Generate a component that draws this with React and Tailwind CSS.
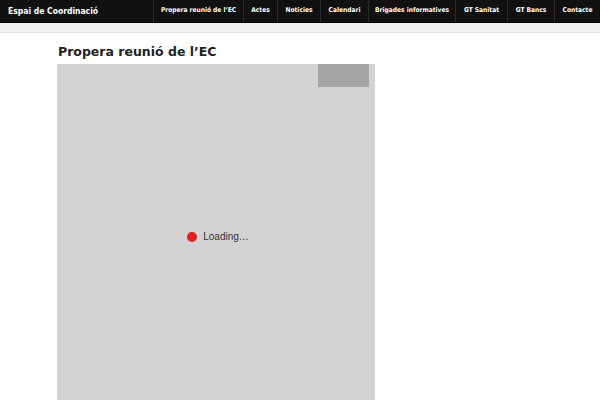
export default function App() {
  const items = [
    ["Propera reunió de l’EC", "w-[90px]"],
    ["Actes", "w-[34px]"],
    ["Noticies", "w-[43px]"],
    ["Calendari", "w-[48px]"],
    ["Brigades informatives", "w-[87px]"],
    ["GT Sanitat", "w-[52px]"],
    ["GT Bancs", "w-[47px]"],
    ["Contacte", "w-[46px]"],
  ];
  return (
    <div className="w-[600px] h-[400px] overflow-hidden bg-white" style={{ fontFamily: '"DejaVu Sans", sans-serif' }}>
      <div className="h-[23px] bg-[#111111] border-b border-[#000] flex items-stretch">
        <div
          className="flex items-center pl-[8px] text-white font-bold text-[8.5px] flex-1 whitespace-nowrap"
          style={{ fontFamily: '"DejaVu Sans Condensed", "DejaVu Sans", sans-serif', fontStretch: "condensed" }}
        >
          Espai de Coordinació
        </div>
        <div className="flex items-stretch shrink-0">
          {items.map(([t, w]) => (
            <div
              key={t}
              className={`${w} flex items-center justify-center border-l border-[#2a2a2a] text-white font-bold text-[6.6px] whitespace-nowrap`}
              style={{ fontFamily: '"DejaVu Sans Condensed", "DejaVu Sans", sans-serif', fontStretch: "condensed" }}
            >
              {t}
            </div>
          ))}
        </div>
      </div>
      <div className="h-[10px] bg-[#f1f1f1] border-b border-[#e2e2e2]" />
      <div className="pl-[57px] pt-[11px]">
        <h1 className="text-[12.5px] font-bold text-[#222] leading-[16px] pl-[1px]">Propera reunió de l’EC</h1>
        <div className="mt-[4px] w-[318px] h-[340px] bg-[#d3d3d3] relative flex items-start justify-center">
          <div className="absolute right-[6px] top-0 w-[51px] h-[23px] bg-[#a6a6a6]" />
          <div className="mt-[165px] flex items-center gap-[6px] ml-[4px]">
            <div className="w-[10px] h-[10px] rounded-full bg-[#e02020]" />
            <span className="text-[10px] text-[#333]" style={{ fontFamily: '"Liberation Sans", sans-serif' }}>Loading…</span>
          </div>
        </div>
      </div>
    </div>
  );
}
